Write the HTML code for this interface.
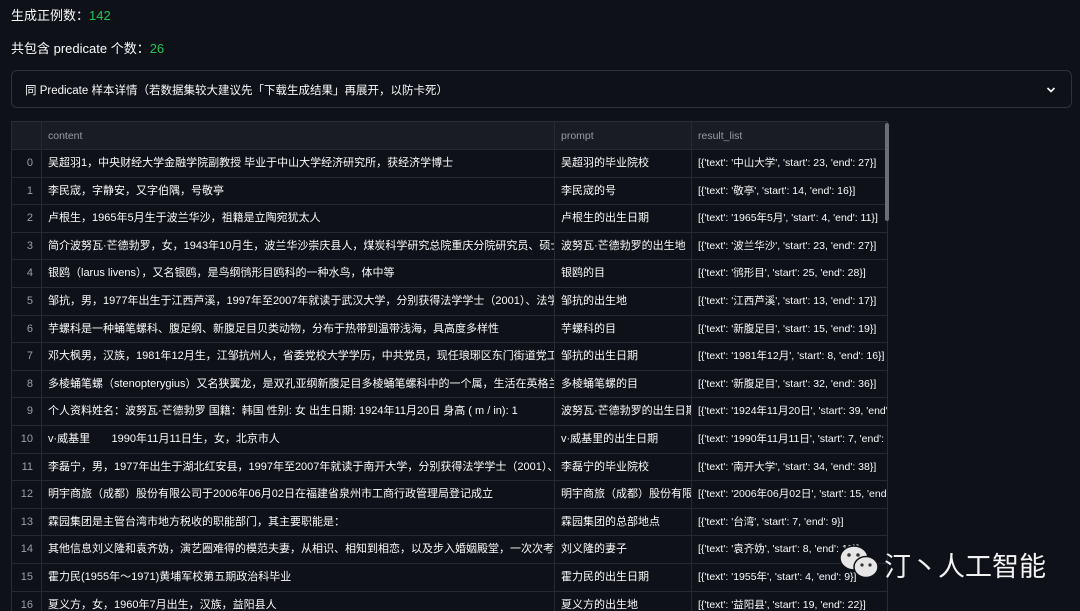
<!DOCTYPE html>
<html><head><meta charset="utf-8"><style>
*{margin:0;padding:0;box-sizing:border-box}
body{width:1080px;height:611px;overflow:hidden;background:#0e1117;color:#fafafa;font-family:"Liberation Sans","Noto Sans CJK SC",sans-serif;position:relative}
.t{position:absolute;font-size:13px;white-space:nowrap}
.g{color:#21c354}
.exp{position:absolute;left:11px;top:70px;width:1061px;height:38px;border:1px solid #2f323b;border-radius:6px}
.exp span{position:absolute;left:13px;top:11px;font-size:11.5px;color:#fafafa}
.tbl{position:absolute;left:11px;top:121px;width:877px;height:490px;overflow:hidden;border:1px solid #2a2c35;border-bottom:none}
.r{position:absolute;left:0;width:877px;height:27.6px;border-bottom:1px solid #262832;font-size:11px;color:#fafafa}
.r div{position:absolute;top:0;height:100%;line-height:26px;overflow:hidden;white-space:nowrap;border-right:1px solid #262832;padding-left:6px}
.r .i{left:0;width:30px;text-align:right;padding-right:8px;padding-left:0;color:#9ca0a8}
.r .c{left:30px;width:513px}
.r .p{left:543px;width:137px}
.r .l{left:680px;width:197px;border-right:none;font-size:10.5px}
.h{background:#1a1c24;top:0;height:28px}
.h div{color:#9a9ca3;font-size:10.5px;line-height:28px}
.sb{position:absolute;left:885px;top:123px;width:4px;height:98px;background:#6c6e75;border-radius:2px}
</style></head><body>
<div class="t" style="left:11px;top:5px">生成正例数：<span class="g">142</span></div>
<div class="t" style="left:11px;top:38px">共包含 predicate 个数：<span class="g">26</span></div>
<div class="exp"><span>同 Predicate 样本详情（若数据集较大建议先「下载生成结果」再展开，以防卡死）</span>
<svg style="position:absolute;right:15px;top:15px" width="10" height="8" viewBox="0 0 10 8"><path d="M1.5 2l3.5 3.5L8.5 2" stroke="#fafafa" stroke-width="1.6" fill="none"/></svg></div>
<div class="tbl">
<div class="r h"><div class="i"></div><div class="c">content</div><div class="p">prompt</div><div class="l">result_list</div></div>
<div class="r" style="top:28px"><div class="i">0</div><div class="c">吴超羽1，中央财经大学金融学院副教授 毕业于中山大学经济研究所，获经济学博士</div><div class="p">吴超羽的毕业院校</div><div class="l">[{'text': '中山大学', 'start': 23, 'end': 27}]</div></div>
<div class="r" style="top:55.6px"><div class="i">1</div><div class="c">李民宬，字静安，又字伯隅，号敬亭</div><div class="p">李民宬的号</div><div class="l">[{'text': '敬亭', 'start': 14, 'end': 16}]</div></div>
<div class="r" style="top:83.2px"><div class="i">2</div><div class="c">卢根生，1965年5月生于波兰华沙，祖籍是立陶宛犹太人</div><div class="p">卢根生的出生日期</div><div class="l">[{'text': '1965年5月', 'start': 4, 'end': 11}]</div></div>
<div class="r" style="top:110.8px"><div class="i">3</div><div class="c">简介波努瓦·芒德勃罗，女，1943年10月生，波兰华沙崇庆县人，煤炭科学研究总院重庆分院研究员、硕士生导师</div><div class="p">波努瓦·芒德勃罗的出生地</div><div class="l">[{'text': '波兰华沙', 'start': 23, 'end': 27}]</div></div>
<div class="r" style="top:138.4px"><div class="i">4</div><div class="c">银鸥（larus livens），又名银鸥，是鸟纲鸻形目鸥科的一种水鸟，体中等</div><div class="p">银鸥的目</div><div class="l">[{'text': '鸻形目', 'start': 25, 'end': 28}]</div></div>
<div class="r" style="top:166px"><div class="i">5</div><div class="c">邹抗，男，1977年出生于江西芦溪，1997年至2007年就读于武汉大学，分别获得法学学士（2001）、法学硕士</div><div class="p">邹抗的出生地</div><div class="l">[{'text': '江西芦溪', 'start': 13, 'end': 17}]</div></div>
<div class="r" style="top:193.6px"><div class="i">6</div><div class="c">芋螺科是一种蛹笔螺科、腹足纲、新腹足目贝类动物，分布于热带到温带浅海，具高度多样性</div><div class="p">芋螺科的目</div><div class="l">[{'text': '新腹足目', 'start': 15, 'end': 19}]</div></div>
<div class="r" style="top:221.2px"><div class="i">7</div><div class="c">邓大枫男，汉族，1981年12月生，江邹抗州人，省委党校大学学历，中共党员，现任琅琊区东门街道党工委</div><div class="p">邹抗的出生日期</div><div class="l">[{'text': '1981年12月', 'start': 8, 'end': 16}]</div></div>
<div class="r" style="top:248.8px"><div class="i">8</div><div class="c">多棱蛹笔螺（stenopterygius）又名狭翼龙，是双孔亚纲新腹足目多棱蛹笔螺科中的一个属，生活在英格兰</div><div class="p">多棱蛹笔螺的目</div><div class="l">[{'text': '新腹足目', 'start': 32, 'end': 36}]</div></div>
<div class="r" style="top:276.4px"><div class="i">9</div><div class="c">个人资料姓名：波努瓦·芒德勃罗 国籍：韩国 性别: 女 出生日期: 1924年11月20日 身高 ( m / in): 1</div><div class="p">波努瓦·芒德勃罗的出生日期</div><div class="l">[{'text': '1924年11月20日', 'start': 39, 'end': 50}]</div></div>
<div class="r" style="top:304px"><div class="i">10</div><div class="c">v·威基里&nbsp;&nbsp;&nbsp;&nbsp;&nbsp;&nbsp;&nbsp;1990年11月11日生，女，北京市人</div><div class="p">v·威基里的出生日期</div><div class="l">[{'text': '1990年11月11日', 'start': 7, 'end': 18}]</div></div>
<div class="r" style="top:331.6px"><div class="i">11</div><div class="c">李磊宁，男，1977年出生于湖北红安县，1997年至2007年就读于南开大学，分别获得法学学士（2001）、</div><div class="p">李磊宁的毕业院校</div><div class="l">[{'text': '南开大学', 'start': 34, 'end': 38}]</div></div>
<div class="r" style="top:359.2px"><div class="i">12</div><div class="c">明宇商旅（成都）股份有限公司于2006年06月02日在福建省泉州市工商行政管理局登记成立</div><div class="p">明宇商旅（成都）股份有限公司</div><div class="l">[{'text': '2006年06月02日', 'start': 15, 'end': 26}]</div></div>
<div class="r" style="top:386.8px"><div class="i">13</div><div class="c">霖园集团是主管台湾市地方税收的职能部门，其主要职能是：</div><div class="p">霖园集团的总部地点</div><div class="l">[{'text': '台湾', 'start': 7, 'end': 9}]</div></div>
<div class="r" style="top:414.4px"><div class="i">14</div><div class="c">其他信息刘义隆和袁齐妫，演艺圈难得的模范夫妻，从相识、相知到相恋，以及步入婚姻殿堂，一次次考验</div><div class="p">刘义隆的妻子</div><div class="l">[{'text': '袁齐妫', 'start': 8, 'end': 11}]</div></div>
<div class="r" style="top:442px"><div class="i">15</div><div class="c">霍力民(1955年～1971)黄埔军校第五期政治科毕业</div><div class="p">霍力民的出生日期</div><div class="l">[{'text': '1955年', 'start': 4, 'end': 9}]</div></div>
<div class="r" style="top:469.6px"><div class="i">16</div><div class="c">夏义方，女，1960年7月出生，汉族，益阳县人</div><div class="p">夏义方的出生地</div><div class="l">[{'text': '益阳县', 'start': 19, 'end': 22}]</div></div>
</div>
<div class="sb"></div>
<svg style="position:absolute;left:838px;top:544px" width="44" height="38" viewBox="0 0 44 38">
<ellipse cx="16" cy="14" rx="14" ry="12" fill="#e6e6e6" stroke="#0e1117" stroke-width="1.5"/>
<circle cx="11" cy="11" r="1.8" fill="#333"/><circle cx="20" cy="11" r="1.8" fill="#333"/>
<ellipse cx="28" cy="23" rx="12" ry="10.5" fill="#e6e6e6" stroke="#0e1117" stroke-width="1.5"/>
<circle cx="24" cy="21" r="1.6" fill="#333"/><circle cx="32" cy="21" r="1.6" fill="#333"/>
</svg>
<div class="t" style="left:884px;top:545px;font-size:27px;color:#f2f2f2;font-family:'Noto Sans CJK SC',sans-serif">汀丶人工智能</div>
</body></html>
